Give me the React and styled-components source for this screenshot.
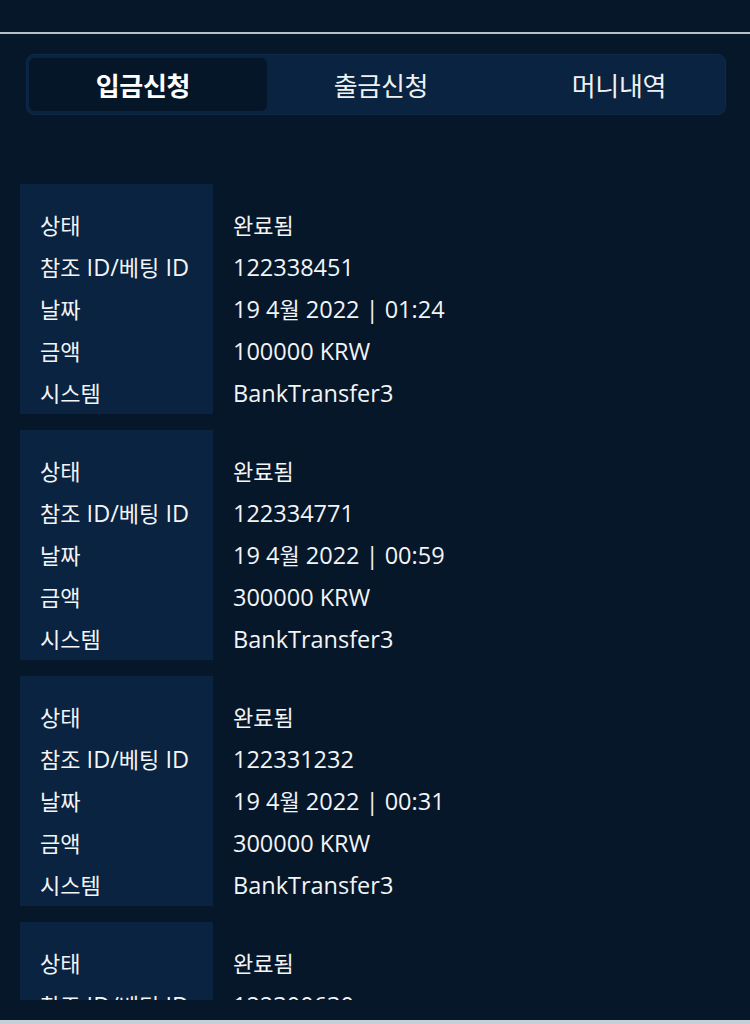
import React from "react";
import styled, { createGlobalStyle } from "styled-components";

const Global = createGlobalStyle`
  html, body { margin: 0; padding: 0; background: #07172a; }
  body {
    font-family: "Open Sans", "Noto Sans CJK KR", sans-serif;
    color: #f2f4f6;
    -webkit-font-smoothing: antialiased;
  }
  * { box-sizing: border-box; }
`;

const Page = styled.div`
  width: 750px;
  height: 1024px;
  display: flex;
  flex-direction: column;
  background: #07172a;
  overflow: hidden;
`;

const TopBar = styled.div`
  height: 32px;
  flex: none;
`;

const Divider = styled.div`
  height: 2px;
  flex: none;
  background: #b7bfc8;
`;

const TabsWrap = styled.div`
  padding: 20px 24px 0 26px;
  flex: none;
`;

const TabBar = styled.div`
  height: 61px;
  border: 1px solid #0e2a49;
  background: #0a2340;
  border-radius: 8px;
  padding: 3px 2px 3px 2px;
  display: grid;
  grid-template-columns: 238px 238px 238px;
  overflow: hidden;
`;

const Tab = styled.div`
  position: relative;
  display: flex;
  align-items: center;
  justify-content: center;
  padding-right: 10px;
  border-radius: 6px;
  background: ${(p) => (p.$active ? "#061629" : "transparent")};
  font-size: 26px;
  font-weight: ${(p) => (p.$active ? 700 : 400)};
  color: ${(p) => (p.$active ? "#ffffff" : "#eef1f4")};
  letter-spacing: -0.3px;
`;

const TabLabel = styled.span`
  position: relative;
  display: inline-block;
`;

const Indicator = styled.span`
  position: absolute;
  left: 50%;
  bottom: -15px;
  width: 48px;
  height: 4px;
  margin-left: -24px;
  border-radius: 2px;
  background: #1e88e5;
`;

const Scroll = styled.div`
  flex: 1;
  overflow: hidden;
  padding: 69px 20px 0 20px;
  display: flex;
  flex-direction: column;
  gap: 16px;
`;

const Card = styled.div`
  display: flex;
  flex: none;
`;

const LabelCol = styled.div`
  width: 193px;
  background: #0a2340;
  padding: 20px 0 0 20px;
  display: flex;
  flex-direction: column;
`;

const ValueCol = styled.div`
  flex: 1;
  padding: 20px 0 0 20px;
  display: flex;
  flex-direction: column;
`;

const Cell = styled.div`
  height: 42px;
  line-height: 42px;
  font-size: 23.5px;
  white-space: nowrap;
  color: #f2f4f6;
`;

const Han = styled.span`
  font-size: 22px;
`;

const Bottom = styled.div`
  height: 24px;
  flex: none;
  display: flex;
  flex-direction: column;
  justify-content: flex-end;
`;

const BottomStrip = styled.div`
  height: 4px;
  background: #c4cfd9;
`;

const labels = ["상태", "참조 ID/베팅 ID", "날짜", "금액", "시스템"];

const records = [
  ["완료됨", "122338451", "19 4월 2022 | 01:24", "100000 KRW", "BankTransfer3"],
  ["완료됨", "122334771", "19 4월 2022 | 00:59", "300000 KRW", "BankTransfer3"],
  ["완료됨", "122331232", "19 4월 2022 | 00:31", "300000 KRW", "BankTransfer3"],
  ["완료됨", "122300630", "19 4월 2022 | 00:12", "300000 KRW", "BankTransfer3"],
];

const tabs = ["입금신청", "출금신청", "머니내역"];

function Mixed({ text }) {
  const parts = text.split(/([\uAC00-\uD7A3]+)/).filter(Boolean);
  return parts.map((p, i) =>
    /[\uAC00-\uD7A3]/.test(p) ? <Han key={i}>{p}</Han> : <React.Fragment key={i}>{p}</React.Fragment>
  );
}

export default function App() {
  return (
    <>
      <Global />
      <Page>
        <TopBar />
        <Divider />
        <TabsWrap>
          <TabBar>
            {tabs.map((t, i) => (
              <Tab key={t} $active={i === 0}>
                <TabLabel>
                  {t}
                  {i === 0 && <Indicator />}
                </TabLabel>
              </Tab>
            ))}
          </TabBar>
        </TabsWrap>
        <Scroll>
          {records.map((r, i) => (
            <Card key={i}>
              <LabelCol>
                {labels.map((l) => (
                  <Cell key={l}>
                    <Mixed text={l} />
                  </Cell>
                ))}
              </LabelCol>
              <ValueCol>
                {r.map((v, j) => (
                  <Cell key={j}>
                    <Mixed text={v} />
                  </Cell>
                ))}
              </ValueCol>
            </Card>
          ))}
        </Scroll>
        <Bottom>
          <BottomStrip />
        </Bottom>
      </Page>
    </>
  );
}
